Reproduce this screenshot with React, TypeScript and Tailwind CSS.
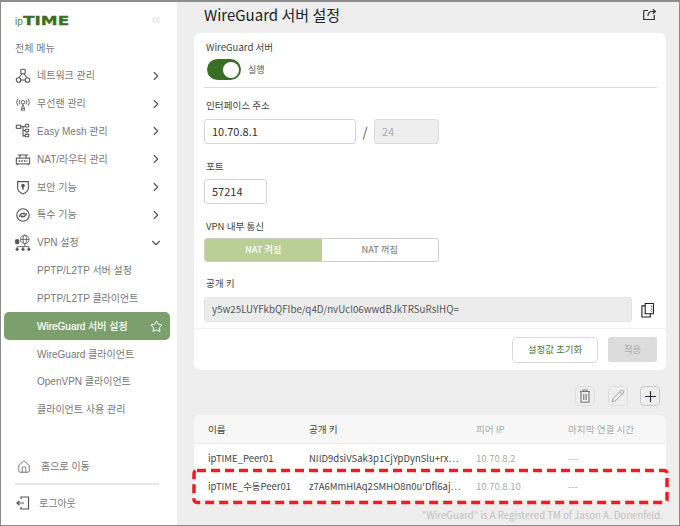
import { ChevronDown, ChevronRight, ChevronsLeft, Home, Pencil, Plus, Star } from "lucide-react";

const ic = { fill: "none", stroke: "#555", strokeWidth: 1.2 };

const NetworkIcon = () => (
  <svg width="16" height="16" viewBox="0 0 18 18" {...ic}>
    <rect x="6.500" y="1.500" width="5" height="5" rx="1" />
    <circle cx="4" cy="13.500" r="2.600" />
    <circle cx="14" cy="13.500" r="2.600" />
    <path d="M8 6.500 4.500 11M10 6.500l3.500 4.500M6.600 13.500h4.800" />
  </svg>
);
const WifiIcon = () => (
  <svg width="16" height="16" viewBox="0 0 18 18" {...ic} strokeWidth={1}>
    <circle cx="9" cy="7" r="2" />
    <path d="M5.500 4.500a4.500 4.500 0 0 0 0 5M12.500 4.500a4.500 4.500 0 0 1 0 5M3.200 3a7 7 0 0 0 0 8M14.800 3a7 7 0 0 1 0 8M9 9v2M7 16l1.200-5h1.600L11 16zM7.600 14h2.800" />
  </svg>
);
const MeshIcon = () => (
  <svg width="16" height="16" viewBox="0 0 18 18" {...ic}>
    <rect x="1.500" y="2.500" width="5" height="3.500" />
    <rect x="11.500" y="1.500" width="4" height="3" rx="1" />
    <rect x="11.500" y="7" width="4" height="3" rx="1" />
    <rect x="11.500" y="12.500" width="4" height="3" rx="1" />
    <path d="M6.500 4.200h5M9 3v11.500h2.500M9 8.500h2.500" />
  </svg>
);
const RouterIcon = () => (
  <svg width="16" height="16" viewBox="0 0 18 18" {...ic}>
    <rect x="1.500" y="8" width="15" height="6.500" />
    <path d="M5 8 6 4.500h6L13 8M3 4.500h12M3 14.500v1.500M15 14.500v1.500" />
    <path d="M4 11.200h1.800M7 11.200h1.800M10 11.200h1.800M13 11.200h1" strokeWidth="1.800" />
  </svg>
);
const ShieldIcon = () => (
  <svg width="16" height="16" viewBox="0 0 18 18" {...ic} strokeWidth={1.300}>
    <path d="M3 3h12v7.500c0 3-3 5-6 6.300-3-1.300-6-3.300-6-6.300z" />
    <circle cx="9" cy="7.500" r="1.400" fill="#555" />
    <path d="M9 8.500v3.500" strokeWidth="1.600" />
  </svg>
);
const SpecialIcon = () => (
  <svg width="16" height="16" viewBox="0 0 18 18" {...ic} strokeWidth={1.300}>
    <circle cx="9" cy="9" r="7" />
    <path d="M5 11c.5-3 3-4.500 6-3.500M13 7c-.5 3-3 4.500-6 3.500" strokeWidth="1.500" />
    <path d="M10 5.500 12 7.500 9.500 9M8 12.500 6 10.500 8.500 9" fill="#555" stroke="none" />
  </svg>
);
const VpnIcon = () => (
  <svg width="18" height="18" viewBox="0 0 20 20" {...ic} strokeWidth={0.900}>
    <circle cx="12" cy="6" r="4.800" />
    <ellipse cx="12" cy="6" rx="2" ry="4.800" />
    <path d="M7.300 6h9.400M12 11v3M3.500 14h13M3.500 14v2M10 14v2M16.500 14v2" />
    <circle cx="3.500" cy="17" r="1.300" fill="#555" />
    <circle cx="10" cy="17" r="1.300" fill="#555" />
    <circle cx="16.500" cy="17" r="1.300" fill="#555" />
    <rect x="1.500" y="6" width="4" height="5" rx="1.500" fill="#555" />
  </svg>
);
const LogoutIcon = () => (
  <svg width="16" height="16" viewBox="0 0 16 16" fill="none" stroke="#555" strokeWidth="1.200">
    <path d="M6 4V2h7.500v12H6v-2" />
    <path d="M9 8H2M4.500 5.800 2 8l2.500 2.200" />
  </svg>
);
const ShareIcon = () => (
  <svg width="13" height="13" viewBox="0 0 13 13" fill="none" stroke="#333" strokeWidth="1.200">
    <path d="M5 2.500H1.500a.8.8 0 0 0-.8.8v8.200h10.600V7" />
    <path d="M5 8c0-3 1.500-4.500 4-4.500h3M9.800 1.200l2.500 2.300-2.500 2.300" />
  </svg>
);
const CopyIcon = () => (
  <svg width="13" height="16" viewBox="0 0 14 16" fill="none" stroke="#222" strokeWidth="1.200">
    <path d="M4.500 1h9v11h-9z" />
    <path d="M4.500 3.500H1v12h9V12" />
    <path d="M11.500 3.500v1M11.500 6.500v1M11.500 9.500v1" />
  </svg>
);
const TrashIcon = () => (
  <svg width="12" height="14" viewBox="0 0 12 14" fill="none" stroke="#777" strokeWidth="1.100">
    <path d="M1 2.500h10M4 2.500V1h4v1.500M2 2.500v10.800h8V2.500M4.800 5v6M7.200 5v6" />
  </svg>
);

const menu = [
  { label: "네트워크 관리", icon: <NetworkIcon /> },
  { label: "무선랜 관리", icon: <WifiIcon /> },
  { label: "Easy Mesh 관리", icon: <MeshIcon /> },
  { label: "NAT/라우터 관리", icon: <RouterIcon /> },
  { label: "보안 기능", icon: <ShieldIcon /> },
  { label: "특수 기능", icon: <SpecialIcon /> },
];

const subMenu = ["PPTP/L2TP 서버 설정", "PPTP/L2TP 클라이언트", "WireGuard 서버 설정", "WireGuard 클라이언트", "OpenVPN 클라이언트", "클라이언트 사용 관리"];

const peers = [
  { name: "ipTIME_Peer01", key: "NIID9dsiVSak3p1CjYpDynSlu+rx…", ip: "10.70.8.2" },
  { name: "ipTIME_수동Peer01", key: "z7A6MmHlAq2SMHO8n0u'Dfl6aj…", ip: "10.70.8.10" },
];

function Sidebar() {
  return (
    <aside className="w-[176px] shrink-0 bg-white flex flex-col font-['Liberation_Sans','Noto_Sans_CJK_KR',sans-serif] text-[10px] text-[#777]">
      <div className="h-[36px] pl-[14px] pr-[14px] flex items-center justify-between">
        <div className="flex items-baseline text-[#3c6e1f] leading-none">
          <span className="text-[10px] text-[#4e8a2a]">ip</span>
          <span className="font-['DejaVu_Sans'] font-bold text-[13px] scale-x-[1.3] origin-left [-webkit-text-stroke:0.3px_#3c6e1f]">TIME</span>
        </div>
        <ChevronsLeft size={14} strokeWidth={1} className="text-[#bbb]" />
      </div>
      <div className="h-[24px] pb-[3px] pl-[14px] flex items-center">전체 메뉴</div>
      {menu.map((m) => (
        <div key={m.label} className="h-[27.8px] flex items-center pl-[14px] pr-[14px] shrink-0">
          <span className="w-[22px] flex justify-start">{m.icon}</span>
          <span className="flex-1">{m.label}</span>
          <ChevronRight size={14} strokeWidth={2} className="text-[#555]" />
        </div>
      ))}
      <div className="h-[27.8px] flex items-center pl-[13px] pr-[14px] shrink-0">
        <span className="w-[23px]"><VpnIcon /></span>
        <span className="flex-1">VPN 설정</span>
        <ChevronDown size={14} strokeWidth={2} className="text-[#555]" />
      </div>
      {subMenu.map((s) =>
        s === "WireGuard 서버 설정" ? (
          <div key={s} className="ml-[3px] mr-[7px] h-[28px] rounded-[5px] bg-[#7ba06d] text-white [-webkit-text-stroke:0.2px_#fff] flex items-center justify-between pl-[33px] pr-[7px] shrink-0">
            <span>{s}</span>
            <Star size={13} strokeWidth={1.800} />
          </div>
        ) : (
          <div key={s} className="h-[27.8px] flex items-center pl-[36px] shrink-0">{s}</div>
        )
      )}
      <div className="mt-auto pl-[14px] pr-[18px] pb-[4px]">
        <div className="h-[27px] flex items-center gap-[10px] border-b-2 border-[#e8e8e4] pb-[3px] box-content">
          <Home size={14} strokeWidth={1.300} className="text-[#555] ml-[2px]" />
          <span>홈으로 이동</span>
        </div>
        <div className="h-[36px] flex items-center gap-[8px]">
          <LogoutIcon />
          <span>로그아웃</span>
        </div>
      </div>
    </aside>
  );
}

function Field({ label, children }: { label: string; children: React.ReactNode }) {
  return (
    <div>
      <div className="pl-[2px] text-[9.600px] leading-[15px] text-[#444]">{label}</div>
      {children}
    </div>
  );
}

function Main() {
  return (
    <main className="relative flex-1 bg-[#eeeeee] pl-[17px] pr-[13px] font-['Noto_Sans_CJK_KR',sans-serif] flex flex-col">
      <div className="h-[31px] pb-[7px] pl-[10px] pr-[10px] flex items-center justify-between">
        <h1 className="text-[15px] text-[#222] leading-none">WireGuard 서버 설정</h1>
        <ShareIcon />
      </div>
      <section className="bg-white rounded-[6px] h-[337px] flex flex-col shrink-0">
        <div className="flex-1 pl-[10px] pr-[9px] pt-[7px]">
          <Field label="WireGuard 서버">
            <div className="flex items-center gap-[7px] mt-[4px] pl-[3px] pb-[7px] border-b border-[#d8d8d8]">
              <div className="w-[34px] h-[21px] rounded-full bg-[#3a6e24] flex items-center justify-end pr-[2px]">
                <div className="w-[16px] h-[16px] rounded-full bg-white" />
              </div>
              <span className="text-[9px] text-[#555]">실행</span>
            </div>
          </Field>
          <div className="mt-[10px]">
            <Field label="인터페이스 주소">
              <div className="mt-[6px] flex items-center">
                <div className="w-[152px] h-[25px] rounded-[3px] border border-[#d4d4d4] pl-[7px] flex items-center text-[11px] text-[#333]">10.70.8.1</div>
                <span className="w-[18px] text-center text-[13px] text-[#555]">/</span>
                <div className="w-[65px] h-[25px] rounded-[3px] border border-[#dcdcdc] bg-[#eeeeee] pl-[7px] flex items-center text-[11px] text-[#aaa]">24</div>
              </div>
            </Field>
          </div>
          <div className="mt-[15px]">
            <Field label="포트">
              <div className="mt-[5px] w-[63px] h-[25px] rounded-[3px] border border-[#d4d4d4] pl-[7px] flex items-center text-[11px] text-[#333]">57214</div>
            </Field>
          </div>
          <div className="mt-[15px]">
            <Field label="VPN 내부 통신">
              <div className="mt-[4px] w-[235px] h-[24px] rounded-[3px] border border-[#cfcfc8] flex text-[9.200px] font-medium overflow-hidden">
                <div className="flex-1 bg-[#b9cf96] text-white flex items-center justify-center">NAT 켜짐</div>
                <div className="flex-1 text-[#888] flex items-center justify-center">NAT 꺼짐</div>
              </div>
            </Field>
          </div>
          <div className="mt-[14px]">
            <Field label="공개 키">
              <div className="mt-[6px] flex items-center">
                <div className="w-[428px] h-[25px] rounded-[3px] border border-[#e4e4e4] bg-[#ececec] pl-[7px] flex items-center text-[9.750px] text-[#555]">y5w25LUYFkbQFIbe/q4D/nvUcl06wwdBJkTRSuRsIHQ=</div>
                <span className="ml-[9px]"><CopyIcon /></span>
              </div>
            </Field>
          </div>
        </div>
        <div className="h-[42px] border-t border-[#eeeeee] pr-[9px] flex items-center justify-end gap-[10px]">
          <button className="w-[86px] h-[26px] rounded-[5px] border border-[#d8d8d8] bg-white text-[9.500px] text-[#4f7a36]">설정값 초기화</button>
          <button className="w-[49px] h-[25px] rounded-[3px] bg-[#dcdcdc] text-[9.500px] text-[#aaa]">적용</button>
        </div>
      </section>
      <div className="mt-[16px] pr-[6px] flex justify-end gap-[12.500px]">
        <button className="w-[20px] h-[20px] rounded-[4px] border border-[#dedede] flex items-center justify-center">
          <TrashIcon />
        </button>
        <button className="w-[20px] h-[20px] rounded-[4px] border border-[#dedede] flex items-center justify-center text-[#777]">
          <Pencil size={14} strokeWidth={1.100} />
        </button>
        <button className="w-[20px] h-[20px] rounded-[4px] border border-[#c8c8c8] flex items-center justify-center text-[#1f2a3a]">
          <Plus size={17} strokeWidth={1.600} />
        </button>
      </div>
      <section className="mt-[9px] rounded-t-[6px] overflow-hidden shrink-0">
        <div className="h-[29px] bg-[#f7f7f7] border-b border-[#ebebeb] flex items-center text-[9.600px]">
          <div className="w-[115px] pl-[14px] text-[#444]">이름</div>
          <div className="w-[167px] text-[#444]">공개 키</div>
          <div className="w-[92px] text-[#aaa]">피어 IP</div>
          <div className="text-[#aaa]">마지막 연결 시간</div>
        </div>
        {peers.map((p) => (
          <div key={p.name} className="h-[28px] bg-white flex items-center text-[9.500px]">
            <div className="w-[115px] pl-[14px] text-[#444]">{p.name}</div>
            <div className="w-[167px] text-[#444]">{p.key}</div>
            <div className="w-[92px] text-[#aaa]">{p.ip}</div>
            <div className="text-[#aaa]">---</div>
          </div>
        ))}
      </section>
      <p className="mt-auto mb-[3px] pr-[3px] text-right text-[9.650px] leading-[14px] text-[#c0c0c0]">"WireGuard" is A Registered TM of Jason A. Donenfeld.</p>
      <svg className="absolute left-[15px] top-[466px]" width="477" height="37" fill="none">
        <rect x="2" y="2.500" width="473" height="32" rx="3" stroke="#ee1c25" strokeWidth="3.500" strokeDasharray="9 5" />
      </svg>
    </main>
  );
}

export default function App() {
  return (
    <div className="w-[680px] h-[526px] overflow-hidden border border-t-2 border-[#8c8c8c] flex">
      <Sidebar />
      <Main />
    </div>
  );
}
